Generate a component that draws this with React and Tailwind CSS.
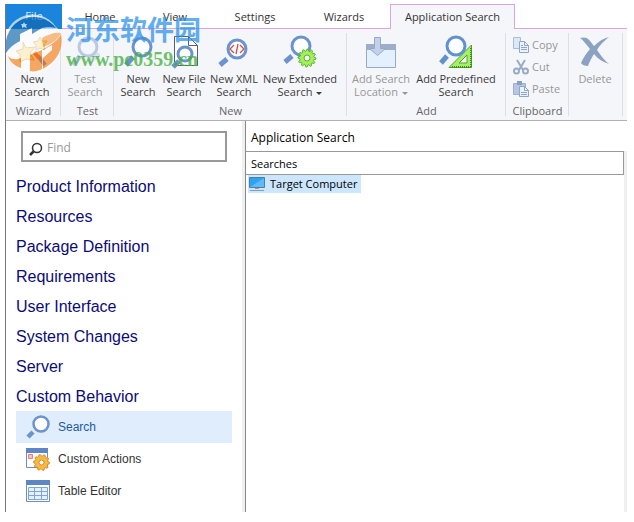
import React from "react";

function Lens({ cx = 20, cy = 11, r = 9, handle = "M11 22 L3 31" }) {
  return (
    <g fill="none">
      <circle cx={cx} cy={cy} r={r} fill="#fdfeff" stroke="#6b93cf" strokeWidth="3" />
      <path d={handle} stroke="#6b93cf" strokeWidth="5" />
    </g>
  );
}

function gearPath(cx, cy, outer, inner, teeth) {
  const points = [];
  const steps = teeth * 4;
  for (let i = 0; i < steps; i += 1) {
    const radius = i % 4 < 2 ? outer : inner;
    const angle = (i / steps) * Math.PI * 2;
    points.push(`${(cx + radius * Math.cos(angle)).toFixed(2)} ${(cy + radius * Math.sin(angle)).toFixed(2)}`);
  }
  return `M${points.join("L")}Z`;
}

function Icon({ children, className = "h-9 w-9" }) {
  return (
    <svg viewBox="0 0 36 36" className={`shrink-0 ${className}`} aria-hidden="true">
      {children}
    </svg>
  );
}

const WizardIcon = () => (
  <Icon>
    <path d="M24 22 L31 31" stroke="#4f74bb" strokeWidth="4" />
    <path d="M20 18 L25 24" stroke="#d9622a" strokeWidth="4" />
    <path d="M9 8l3 6 9-1-5 6 4 7-8-1-6 3v-7l-4-4 7-2z" fill="#f8d67c" stroke="#c99532" />
    <path d="M26 3l2 4 5 0-3 4 1 5-5-2-4 2 0-5-3-3 5-1z" fill="#f8d67c" stroke="#c99532" />
  </Icon>
);

const TestIcon = () => (
  <Icon>
    <g opacity="0.6">
      <path d="M23 14v16l10-9z" fill="#cfdaf0" stroke="#a9bbdc" />
      <circle cx="21" cy="13" r="9" fill="#f3f6fc" stroke="#94abd6" strokeWidth="3" />
      <path d="M13 22 L6 31" stroke="#94abd6" strokeWidth="5" />
    </g>
  </Icon>
);

const SearchIcon = () => (
  <Icon>
    <Lens cx={22} cy={13} r={9} handle="M13 23 L6 31" />
  </Icon>
);

const FileSearchIcon = () => (
  <Icon>
    <path d="M8.500 2.500h14l9 9v20h-23z" fill="#fff" stroke="#55606e" />
    <path d="M22.500 2.500v9h9" fill="none" stroke="#55606e" />
    <Lens cx={19} cy={20} r={7} handle="M13 27 L7 33" />
  </Icon>
);

const XmlIcon = () => (
  <Icon>
    <Lens cx={21} cy={15} r={9} handle="M11 25 L4 31" />
    <path d="M18 11l-4 4 4 4M24 11l4 4-4 4M22 10l-2 10" fill="none" stroke="#dc4b3e" strokeWidth="1.3" />
  </Icon>
);

const ExtendedIcon = () => (
  <Icon>
    <Lens cx={19} cy={12} r={9} handle="M10 22 L3 28" />
    <path d={gearPath(25, 24, 9, 7, 12)} fill="#a3ef5c" stroke="#56b530" />
    <circle cx="25" cy="24" r="3" fill="#fff" stroke="#56b530" />
  </Icon>
);

const LocationIcon = () => (
  <Icon>
    <path d="M3.500 10.500h29v23h-29z" fill="#e3f0fd" stroke="#98a9c6" />
    <path d="M3 10h30v6H3z" fill="#9dadca" />
    <path d="M11.500 3.500h6v11h5l-8 7-8-7h5z" fill="#c3d0ea" stroke="#98a9c6" />
  </Icon>
);

const PredefinedIcon = () => (
  <Icon>
    <path d="M33.500 11v22.500H11z" fill="#a6ef68" stroke="#4fa32a" />
    <path d="M33 14v19" stroke="#3e8a22" strokeWidth="2" strokeDasharray="1 1" />
    <path d="M14 33h20" stroke="#3e8a22" strokeWidth="2" strokeDasharray="1 1" />
    <path d="M29 21v8h-8z" fill="#fff" stroke="#4fa32a" />
    <circle cx="18" cy="12" r="9" fill="#fdfeff" stroke="#5f92cf" strokeWidth="3" />
    <path d="M9 22 L3 29" stroke="#5f92cf" strokeWidth="5" />
  </Icon>
);

const DeleteIcon = () => (
  <Icon>
    <path d="M3 4c7-2 9 1 14 8 5-5 10-8 15-9-6 5-9 8-12 13 5 7 8 11 12 14-6-2-11-5-15-10-3 5-5 9-6 12-3 0-6-1-7-3 2-5 5-9 9-14C9 10 6 6 3 4z" fill="#8ba2c1" />
  </Icon>
);

const CopyIcon = () => (
  <svg viewBox="0 0 16 16" className="h-4 w-4 shrink-0" aria-hidden="true">
    <path d="M.5.5h7v11h-7z" fill="#dde8f7" stroke="#a9bcd8" />
    <path d="M6.500 4.500h5l4 4v7h-9z" fill="#eaf2fc" stroke="#8fa6ca" />
    <path d="M11.500 4.500v4h4M8 8.500h2M8 10.500h6M8 12.500h6" fill="none" stroke="#8fa6ca" />
  </svg>
);

const CutIcon = () => (
  <svg viewBox="0 0 16 16" className="h-4 w-4 shrink-0" aria-hidden="true">
    <path d="M4 1l6 10M12 1L6 11" stroke="#9aabc6" strokeWidth="2" />
    <circle cx="3.500" cy="12" r="2.500" fill="none" stroke="#9aabc6" strokeWidth="2" />
    <circle cx="12.500" cy="12" r="2.500" fill="none" stroke="#9aabc6" strokeWidth="2" />
  </svg>
);

const PasteIcon = () => (
  <svg viewBox="0 0 16 16" className="h-4 w-4 shrink-0" aria-hidden="true">
    <path d="M.5 2.500h12v11H.5z" fill="#b6c7e2" stroke="#9db0d0" />
    <path d="M4 0h5v4H4z" fill="#8b9fc2" />
    <path d="M6.500 5.500h5l4 4v6h-9z" fill="#eaf2fc" stroke="#8fa6ca" />
    <path d="M11.500 5.500v4h4M8 11.500h6M8 13.500h6" fill="none" stroke="#8fa6ca" />
  </svg>
);

const SideSearchIcon = () => (
  <svg viewBox="0 0 24 24" className="h-6 w-6 shrink-0" aria-hidden="true">
    <circle cx="15" cy="9" r="7.500" fill="#fff" stroke="#6b93cf" strokeWidth="2.500" />
    <path d="M7 17 L2 22" stroke="#6b93cf" strokeWidth="4.500" />
  </svg>
);

const ActionsIcon = () => (
  <svg viewBox="0 0 24 24" className="h-6 w-6 shrink-0" aria-hidden="true">
    <path d="M.5 1.500h21v19H.5z" fill="#fff" stroke="#6b8fc9" />
    <path d="M0 1h22v5H0z" fill="#5c86c6" />
    <path d="M2.500 7.500h4v4h-4z" fill="#f7bcbc" stroke="#e58080" />
    <path d={gearPath(15.5, 15.5, 8, 6.5, 10)} fill="#f7b945" stroke="#d58d25" />
    <circle cx="15.500" cy="15.500" r="2.500" fill="#fff" stroke="#d58d25" />
  </svg>
);

const TableIcon = () => (
  <svg viewBox="0 0 24 24" className="h-6 w-6 shrink-0" aria-hidden="true">
    <path d="M.5 1.500h23v21H.5z" fill="#fff" stroke="#6b8fc9" />
    <path d="M0 1h24v5H0z" fill="#5c86c6" />
    <path d="M2.500 8.500h19v12h-19zM2.500 12.500h19M2.500 16.500h19M8.500 8.500v12M15.500 8.500v12" fill="#e6f1fc" stroke="#7ea6da" />
  </svg>
);

const MonitorIcon = () => (
  <svg viewBox="0 0 18 16" className="h-4 w-[18px] shrink-0" aria-hidden="true">
    <path d="M1.500 1.500h15v10h-15z" fill="#2fa3ee" stroke="#4c7fa8" />
    <path d="M2 11L16 2v9z" fill="#5dbcf7" />
    <path d="M7 12h4v1H7zM2 14h14v1H2z" fill="#8d9aa5" />
  </svg>
);

const Caret = () => <span className="ml-1 inline-block border-x-3 border-t-3 border-x-transparent border-t-current align-middle" />;

function RibbonButton({ icon, lines, width, disabled, caret }) {
  return (
    <button
      type="button"
      disabled={disabled}
      className={`flex shrink-0 flex-col items-center gap-0.5 whitespace-nowrap leading-[13px] ${width} ${disabled ? "text-[#979797]" : "text-[#3c3c3c]"}`}
    >
      {icon}
      {lines.map((line, i) => (
        <span key={line} className={i === 0 ? "-mb-0.5" : ""}>
          {line}
          {caret && i === lines.length - 1 && <Caret />}
        </span>
      ))}
    </button>
  );
}

function Group({ label, className, children }) {
  return (
    <section className={`relative flex shrink-0 flex-col justify-between pt-[5px] pb-px ${className}`}>
      <div className="flex pl-px">{children}</div>
      <h2 className="h-4 text-center leading-4 text-[#666]">{label}</h2>
      <span className="absolute top-1 right-0 bottom-1 w-px bg-[#dddfe4]" />
    </section>
  );
}

const clipboard = [
  ["Copy", CopyIcon],
  ["Cut", CutIcon],
  ["Paste", PasteIcon],
];

function Ribbon() {
  return (
    <div className="flex h-[92px] overflow-hidden border-b border-[#b0b0b0] bg-[#f5f6f9]">
      <Group label="Wizard" className="w-[55px]">
        <RibbonButton icon={<WizardIcon />} lines={["New", "Search"]} width="w-[50px]" />
      </Group>
      <Group label="Test" className="w-[53px]">
        <RibbonButton icon={<TestIcon />} lines={["Test", "Search"]} width="w-[46px]" disabled />
      </Group>
      <Group label="New" className="w-[233px]">
        <RibbonButton icon={<SearchIcon />} lines={["New", "Search"]} width="w-[46px]" />
        <RibbonButton icon={<FileSearchIcon />} lines={["New File", "Search"]} width="w-[46px]" />
        <RibbonButton icon={<XmlIcon />} lines={["New XML", "Search"]} width="w-[54px]" />
        <RibbonButton icon={<ExtendedIcon />} lines={["New Extended", "Search"]} width="w-[78px]" caret />
      </Group>
      <Group label="Add" className="w-[159px]">
        <RibbonButton icon={<LocationIcon />} lines={["Add Search", "Location"]} width="w-[66px]" disabled caret />
        <RibbonButton icon={<PredefinedIcon />} lines={["Add Predefined", "Search"]} width="w-[84px]" />
      </Group>
      <Group label="Clipboard" className="w-[63px]">
        <ul className="flex flex-col pl-1.5">
          {clipboard.map(([name, Glyph]) => (
            <li key={name}>
              <button type="button" disabled className="flex h-[22px] items-center gap-[3px] text-[#979797]">
                <Glyph />
                {name}
              </button>
            </li>
          ))}
        </ul>
      </Group>
      <Group label="" className="w-[54px]">
        <RibbonButton icon={<DeleteIcon />} lines={["Delete"]} width="w-[50px]" disabled />
      </Group>
    </div>
  );
}

const tabs = [
  ["Home", "w-[76px]"],
  ["View", "w-[74px]"],
  ["Settings", "w-[86px]"],
  ["Wizards", "w-[92px]"],
];

function Tabs() {
  return (
    <nav className="flex h-[25px] text-[#333]">
      <button type="button" className="w-14 shrink-0 bg-[#1b84dd] text-[#d5ebfc]">File</button>
      {tabs.map(([name, width]) => (
        <button key={name} type="button" className={`shrink-0 border-b border-[#dba6e0] pt-0.5 ${width}`}>
          {name}
        </button>
      ))}
      <button type="button" className="w-[125px] shrink-0 border border-b-0 border-[#dba6e0] bg-[#f5f6f9]">
        Application Search
      </button>
      <span className="flex-1 border-b border-[#dba6e0]" />
    </nav>
  );
}

function Watermark() {
  return (
    <div className="pointer-events-none absolute top-1 left-0 flex">
      <svg viewBox="0 0 60 66" className="h-[66px] w-[60px] opacity-65" aria-hidden="true">
        <path d="M0 43A28 28 0 0 1 50 19C58 24 56 40 49 54A28 28 0 0 1 0 45z" fill="#fff" />
        <path d="M0 41A28 28 0 0 1 50 20C46 19 40 19 36 20L26 26V20L14 26V33C8 36 3 40 0 45z" fill="#0f66ad" />
        <path d="M2 48C6 52 10 52 15 50V60C9 58 4 54 2 48z" fill="#f57c14" />
        <path d="M24 47L36 42V61C32 63 28 64 24 63z" fill="#f57c14" />
        <path d="M37 41C47 36 53 31 55 26C58 42 50 54 37 61V50L46 42V37L37 42z" fill="#f57c14" />
        <path d="M36 30C43 26 49 24 55 25C53 31 46 36 37 39z" fill="#f9a04a" />
        <path d="M18 14l1 2 2 0-1 2 1 2-3-1-2 1 0-2-1-2 2 0z" fill="#fff" />
      </svg>
      <div className="whitespace-nowrap opacity-75">
        <p className="pt-1 font-['Noto_Sans_CJK_SC','Noto_Sans_CJK_TC',sans-serif] text-[27px] leading-[34px] font-bold text-[#2f93ea]">河东软件园</p>
        <p className="font-['Liberation_Serif',serif] text-[20px] leading-[26px] font-bold text-[#3fae3a]">www.pc0359.cn</p>
      </div>
    </div>
  );
}

const categories = [
  "Product Information",
  "Resources",
  "Package Definition",
  "Requirements",
  "User Interface",
  "System Changes",
  "Server",
  "Custom Behavior",
];

const tools = [
  ["Search", SideSearchIcon, true],
  ["Custom Actions", ActionsIcon, false],
  ["Table Editor", TableIcon, false],
];

function Sidebar() {
  return (
    <aside className="w-[239px] shrink-0 border-r-3 border-[#efefef] px-2.5 pt-2.5 font-['Liberation_Sans',Arial,sans-serif]">
      <label className="mx-[5px] flex h-[31px] items-center gap-1 border-2 border-[#999] pl-1.5">
        <svg viewBox="0 0 14 14" className="mt-1 h-3.5 w-3.5 shrink-0" aria-hidden="true">
          <circle cx="8" cy="6" r="4.500" fill="none" stroke="#333" strokeWidth="1.500" />
          <path d="M4.500 9.500L1 13" stroke="#333" strokeWidth="2.500" />
        </svg>
        <input
          type="text"
          aria-label="Find"
          placeholder="Find"
          className="w-full min-w-0 bg-transparent pt-0.5 font-['Open_Sans',sans-serif] text-xs outline-none placeholder:text-[#999]"
        />
      </label>
      <ul className="pt-[9px] text-base text-[#0b0b78]">
        {categories.map((name) => (
          <li key={name}>
            <a href="#" className="block h-[30px] leading-8">{name}</a>
          </li>
        ))}
      </ul>
      <ul className="text-xs text-[#333]">
        {tools.map(([name, Glyph, active]) => (
          <li key={name}>
            <a href="#" className={`flex h-8 items-center gap-2 pl-2.5 ${active ? "bg-[#e0edfd] text-[#1b5a9e]" : ""}`}>
              <Glyph />
              {name}
            </a>
          </li>
        ))}
      </ul>
    </aside>
  );
}

export default function App() {
  return (
    <div className="min-h-screen bg-white pt-1 pr-[7px] pb-2.5 pl-[5px] font-['Open_Sans','Noto_Sans',sans-serif] text-[11px] text-black">
      <div className="relative flex min-h-[508px] flex-col border-l border-[#777]">
        <header>
          <Tabs />
          <Ribbon />
        </header>
        <div className="flex flex-1">
          <Sidebar />
          <main className="flex min-w-0 flex-1 flex-col border-l border-[#888]">
            <h1 className="h-[30px] pl-[5px] text-xs leading-[34px]">Application Search</h1>
            <div className="flex-1 border-r-3 border-[#efefef]">
              <h2 className="h-6 border border-l-0 border-[#999] pl-[5px] leading-6">Searches</h2>
              <ul className="pl-0.5">
                <li>
                  <button type="button" className="flex h-[18px] items-center gap-1 bg-[#cce6fd] pr-1">
                    <MonitorIcon />
                    Target Computer
                  </button>
                </li>
              </ul>
            </div>
          </main>
        </div>
        <Watermark />
      </div>
    </div>
  );
}
